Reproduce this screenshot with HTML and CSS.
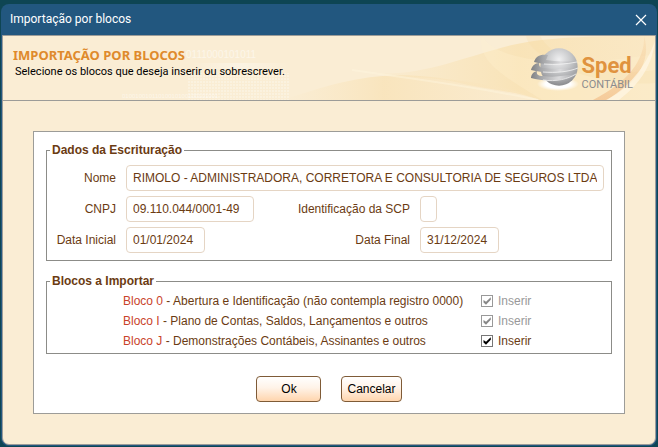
FILE: index.html
```html
<!DOCTYPE html>
<html lang="pt-BR">
<head>
<meta charset="utf-8">
<meta name="viewport" content="width=device-width, initial-scale=1">
<title>Importação por blocos</title>
<link rel="stylesheet" href="styles.css">
</head>
<body>
<main class="window">
  <div class="titlebar">
    <span>Importação por blocos</span>
    <button class="close" type="button" aria-label="Fechar">
      <svg viewBox="0 0 12 12" width="12" height="12" aria-hidden="true"><path d="M1 1L11 11M11 1L1 11" fill="none" stroke="#fff" stroke-width="1.2"/></svg>
    </button>
  </div>
  <div class="content">
    <header class="banner">
      <svg class="waves" viewBox="0 0 653 64" preserveAspectRatio="xMaxYMid slice" aria-hidden="true">
        <defs>
          <linearGradient id="gold" x1="0" y1="0" x2="1" y2="0">
            <stop offset="0" stop-color="#f7dfae" stop-opacity="0"/>
            <stop offset=".55" stop-color="#f8dda5" stop-opacity=".6"/>
            <stop offset="1" stop-color="#fae3b6" stop-opacity=".5"/>
          </linearGradient>
          <linearGradient id="low" x1="0" y1="0" x2="1" y2="0">
            <stop offset="0" stop-color="#f9e3b8" stop-opacity="0"/>
            <stop offset=".4" stop-color="#f8dfae" stop-opacity=".6"/>
            <stop offset="1" stop-color="#fae7c4" stop-opacity=".3"/>
          </linearGradient>
          <linearGradient id="edge" x1="0" y1="0" x2="0" y2="1">
            <stop offset="0" stop-color="#f5c990" stop-opacity=".2"/>
            <stop offset="1" stop-color="#f2bb84" stop-opacity=".65"/>
          </linearGradient>
          <linearGradient id="streak" x1="0" y1="0" x2="1" y2="0">
            <stop offset="0" stop-color="#fff" stop-opacity="0"/>
            <stop offset=".5" stop-color="#fff" stop-opacity=".6"/>
            <stop offset="1" stop-color="#fff" stop-opacity="0"/>
          </linearGradient>
          <pattern id="dots" width="3" height="3" patternUnits="userSpaceOnUse"><rect width="2" height="2" fill="#fff" opacity=".25"/></pattern>
        </defs>
        <path d="M350 34C410 46 450 24 510 9C550 0 600 0 653 0V64H538C510 54 480 53 453 46C420 39 390 42 350 34Z" fill="url(#gold)"/>
        <path d="M280 64C330 48 370 34 430 41C485 48 510 51 536 64Z" fill="url(#low)"/>
        <path d="M350 34C410 43 460 48 536 64" fill="none" stroke="#fff7e2" stroke-width="2" opacity=".4"/>
        <path d="M480 0C490 20 545 36 653 18V64H540C505 42 474 26 480 0Z" fill="#fff1d2" opacity=".3"/>
        <path d="M524 0C528 22 590 52 653 47V34C600 42 553 26 538 0Z" fill="#f6d79d" opacity=".2"/>
        <path d="M642 0C650 24 635 49 604 64H591C626 46 643 24 642 0Z" fill="url(#edge)"/>
        <path d="M653 5C650 32 635 50 617 64H605C632 47 645 27 653 5Z" fill="#fff7e6" opacity=".7"/>
        <rect x="188" y="27" width="100" height="6" fill="url(#streak)" opacity=".6"/>
        <rect x="185" y="37" width="103" height="27" fill="url(#dots)"/>
        <text class="bits" x="184" y="22">0111000101011</text>
        <text class="bits small" x="120" y="62">01001001011010010100100101001</text>
      </svg>
      <div class="intro">
        <h1>IMPORTAÇÃO POR BLOCOS</h1>
        <p>Selecione os blocos que deseja inserir ou sobrescrever.</p>
      </div>
      <div class="brand">
        <svg viewBox="0 0 50 46" width="50" height="46" aria-hidden="true">
          <defs>
            <radialGradient id="ball" cx=".5" cy=".3" r=".72">
              <stop offset="0" stop-color="#f0f0f1"/>
              <stop offset=".45" stop-color="#c7c8ca"/>
              <stop offset=".8" stop-color="#a2a3a6"/>
              <stop offset="1" stop-color="#858689"/>
            </radialGradient>
            <linearGradient id="band" x1="0" y1="0" x2="1" y2="0">
              <stop offset="0" stop-color="#808184"/>
              <stop offset=".2" stop-color="#a3a4a6"/>
              <stop offset=".62" stop-color="#dadadc"/>
              <stop offset="1" stop-color="#a4a5a8"/>
            </linearGradient>
            <radialGradient id="glow">
              <stop offset=".6" stop-color="#fff"/>
              <stop offset="1" stop-color="#fff" stop-opacity="0"/>
            </radialGradient>
          </defs>
          <ellipse cx="28" cy="37" rx="21" ry="7" fill="url(#glow)"/>
          <circle cx="29" cy="20" r="18.7" fill="url(#ball)"/>
          <path d="M18 8C10 7 6 9 4 15C17 19 34 17 47 15C38 14 27 15 16 13Z" fill="url(#band)"/>
          <path d="M9 16C5 16 2 19 1 23C15 27 35 26 48 21C38 21 27 23 14 21C10 21 9 19 9 16Z" fill="url(#band)"/>
          <path d="M7 24C3 25 1 28 1 31C15 35 34 34 46 27C37 28 26 31 13 29C8 29 6 27 7 24Z" fill="url(#band)"/>
          <path d="M14 17C26 18 36 17 47 15M13 25C26 26 38 25 48 21M13 33C26 35 38 32 46 27" fill="none" stroke="#f4f4f4" stroke-width=".8"/>
        </svg>
        <div class="wordmark"><strong>Sped</strong><span>CONTÁBIL</span></div>
      </div>
    </header>
    <form class="panel">
      <fieldset class="group">
        <legend>Dados da Escrituração</legend>
        <div class="fields">
          <label for="nome">Nome</label>
          <input class="wide" id="nome" type="text" readonly value="RIMOLO - ADMINISTRADORA, CORRETORA E CONSULTORIA DE SEGUROS LTDA">
          <label for="cnpj">CNPJ</label>
          <input class="number" id="cnpj" type="text" readonly value="09.110.044/0001-49">
          <label for="scp">Identificação da SCP</label>
          <input class="code" id="scp" type="text" readonly>
          <label for="inicio">Data Inicial</label>
          <input class="date" id="inicio" type="text" readonly value="01/01/2024">
          <label for="fim">Data Final</label>
          <input class="date" id="fim" type="text" readonly value="31/12/2024">
        </div>
      </fieldset>
      <fieldset class="group">
        <legend>Blocos a Importar</legend>
        <div class="blocks">
          <div class="block">
            <span><b>Bloco 0</b> - Abertura e Identificação (não contempla registro 0000)</span>
            <label><input type="checkbox" checked disabled>Inserir</label>
          </div>
          <div class="block">
            <span><b>Bloco I</b> - Plano de Contas, Saldos, Lançamentos e outros</span>
            <label><input type="checkbox" checked disabled>Inserir</label>
          </div>
          <div class="block">
            <span><b>Bloco J</b> - Demonstrações Contábeis, Assinantes e outros</span>
            <label><input type="checkbox" checked>Inserir</label>
          </div>
        </div>
      </fieldset>
      <div class="actions">
        <button class="button ok" type="button">Ok</button>
        <button class="button" type="button">Cancelar</button>
      </div>
    </form>
  </div>
</main>
</body>
</html>
```
FILE: styles.css
```css
* {
  box-sizing: border-box;
}

body {
  display: flex;
  min-height: 100vh;
  margin: 0;
  padding: 4px 1px 1px;
  background: #0e4553;
  color: #6b3b12;
  font: 12px/15px "Liberation Sans", Arial, sans-serif;
}

.window {
  display: flex;
  flex: 1;
  flex-direction: column;
  padding: 0 1px 1px;
  border-radius: 8px;
  background: #22577f;
}

.titlebar {
  display: flex;
  align-items: center;
  justify-content: space-between;
  height: 31px;
  padding: 0 9px 0 8px;
  color: #fff;
  font-family: Roboto, "Noto Sans", sans-serif;
}

.close {
  display: flex;
  padding: 0;
  border: 0;
  background: none;
}

.content {
  flex: 1;
  overflow: hidden;
  border: 1px solid #9c9c98;
  border-radius: 0 0 7px 7px;
  background: #faedd4;
}

.banner {
  position: relative;
  display: flex;
  justify-content: space-between;
  height: 65px;
  border-bottom: 1px solid #9c9c98;
}

.waves {
  position: absolute;
  inset: 0;
  width: 100%;
  height: 100%;
}

.bits {
  fill: #fff;
  opacity: .5;
  font: 10px "Liberation Sans", sans-serif;
}

.bits.small {
  font-size: 6px;
}

.intro {
  position: relative;
  padding: 11px 0 0 10px;
}

.intro h1 {
  margin: 0;
  color: #df8a2c;
  font: bold 13px/16px "Noto Sans", sans-serif;
}

.intro p {
  margin: 0 0 0 2px;
  color: #000;
  font: 11px/18px Roboto, "Noto Sans", sans-serif;
}

.brand {
  position: relative;
  display: flex;
  gap: 1px;
  padding: 11px 22px 0 0;
}

.wordmark {
  display: flex;
  flex-direction: column;
  padding-top: 7px;
  color: #8b8c8e;
  font: 11px/14px Roboto, sans-serif;
}

.wordmark strong {
  color: #e0933f;
  font: bold 22px/24px Roboto, sans-serif;
}

.panel {
  margin: 30px;
  padding: 11px 12px;
  border: 1px solid #9c9c98;
  background: #fff;
}

.group {
  min-width: 0;
  margin: 0 0 13px;
  padding: 0;
  border: 1px solid #8c8c88;
}

legend {
  margin-left: 3px;
  padding: 0 2px;
  font-weight: bold;
}

.fields {
  display: grid;
  grid-template-columns: 62px 1fr auto 184px;
  align-items: center;
  gap: 5px 10px;
  padding: 7px;
}

.fields label {
  text-align: right;
  white-space: nowrap;
}

.fields input {
  height: 26px;
  padding: 0 6px;
  border: 1px solid #e5d5c4;
  border-radius: 4px;
  background: #fff;
  color: inherit;
  font: inherit;
}

.fields .wide {
  grid-column: 2 / -1;
  width: 100%;
}

.number {
  width: 128px;
}

.date {
  width: 79px;
}

.code {
  width: 17px;
}

.blocks {
  padding: 2px 0 2px 76px;
}

.block {
  display: grid;
  grid-template-columns: 1fr 130px;
  align-items: center;
  height: 20px;
}

.block b {
  color: #c9432b;
  font-weight: normal;
}

.block label {
  display: flex;
  align-items: center;
  gap: 5px;
}

.block label:has(:disabled) {
  color: #999;
}

.block input {
  appearance: none;
  width: 12px;
  height: 12px;
  margin: 0;
  border: 1px solid #777;
  color: #000;
}

.block input:disabled {
  border-color: #999;
  color: #888;
}

.block input:checked::before {
  content: "";
  display: block;
  width: 10px;
  height: 10px;
  background: currentColor;
  clip-path: polygon(15% 40%, 40% 58%, 88% 12%, 88% 38%, 40% 88%, 15% 66%);
}

.actions {
  display: flex;
  justify-content: center;
  gap: 20px;
  padding-top: 9px;
}

.button {
  height: 26px;
  padding: 0 5px;
  border: 1px solid #7f5b37;
  border-radius: 4px;
  background: linear-gradient(#fff, #fff3e8 45%, #ffd5ad);
  color: #000;
  font: inherit;
}

.ok {
  width: 65px;
}
```
